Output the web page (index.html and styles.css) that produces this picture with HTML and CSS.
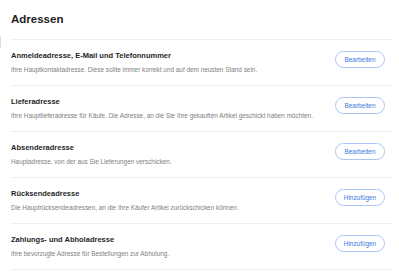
FILE: index.html
```
<!DOCTYPE html>
<html>
    <head>
        <title>Adressen</title>
        <link rel="stylesheet" href="styles.css">
    </head>
    <body>
        <div class="edge"></div>
        <div id="page">
            <h1>Adressen</h1>

            <div class="row">
                <div class="info">
                    <h3>Anmeldeadresse, E-Mail und Telefonnummer</h3>
                    <p>Ihre Hauptkontaktadresse. Diese sollte immer korrekt und auf dem neusten Stand sein.</p>
                </div>
                <button class="btn">Bearbeiten</button>
            </div>

            <div class="row">
                <div class="info">
                    <h3>Lieferadresse</h3>
                    <p>Ihre Hauptlieferadresse für Käufe. Die Adresse, an die Sie Ihre gekauften Artikel geschickt haben möchten.</p>
                </div>
                <button class="btn">Bearbeiten</button>
            </div>

            <div class="row">
                <div class="info">
                    <h3>Absenderadresse</h3>
                    <p>Hauptadresse, von der aus Sie Lieferungen verschicken.</p>
                </div>
                <button class="btn">Bearbeiten</button>
            </div>

            <div class="row">
                <div class="info">
                    <h3>Rücksendeadresse</h3>
                    <p>Die Hauptrücksendeadressen, an die Ihre Käufer Artikel zurückschicken können.</p>
                </div>
                <button class="btn">Hinzufügen</button>
            </div>

            <div class="row last">
                <div class="info">
                    <h3>Zahlungs- und Abholadresse</h3>
                    <p>Ihre bevorzugte Adresse für Bestellungen zur Abholung.</p>
                </div>
                <button class="btn">Hinzufügen</button>
            </div>
        </div>
    </body>
</html>
```

FILE: styles.css
```
body{
    margin: 0;
    background-color: #fff;
    font-family: "Liberation Sans", Arial, sans-serif;
    color: #222;
}

.edge{
    position: absolute;
    left: 0;
    top: 36px;
    width: 1px;
    height: 12px;
    background-color: #ddd;
}

#page{
    padding: 0 6px 0 11px;
}

h1{
    margin: 0;
    padding: 12px 0 13px 0;
    font-size: 11.5px;
    line-height: 14px;
    font-weight: bold;
}

.row{
    display: flex;
    justify-content: space-between;
    align-items: flex-start;
    height: 45px;
    border-top: 1px solid #efefef;
    padding-right: 8px;
}

.row.last{
    border-bottom: 1px solid #efefef;
}

.info{
    padding-top: 11px;
}

.info h3{
    margin: 0;
    font-size: 7.5px;
    line-height: 10px;
    font-weight: bold;
    color: #1f1f1f;
}

.info p{
    margin: 5px 0 0 0;
    font-size: 6.4px;
    line-height: 8px;
    color: #808080;
}

.btn{
    margin-top: 11px;
    width: 50px;
    height: 17px;
    padding: 0;
    border: 1px solid #a9c6f6;
    border-radius: 9px;
    background-color: #fff;
    color: #3a78de;
    font-family: "Liberation Sans", Arial, sans-serif;
    font-size: 6.4px;
}
```
